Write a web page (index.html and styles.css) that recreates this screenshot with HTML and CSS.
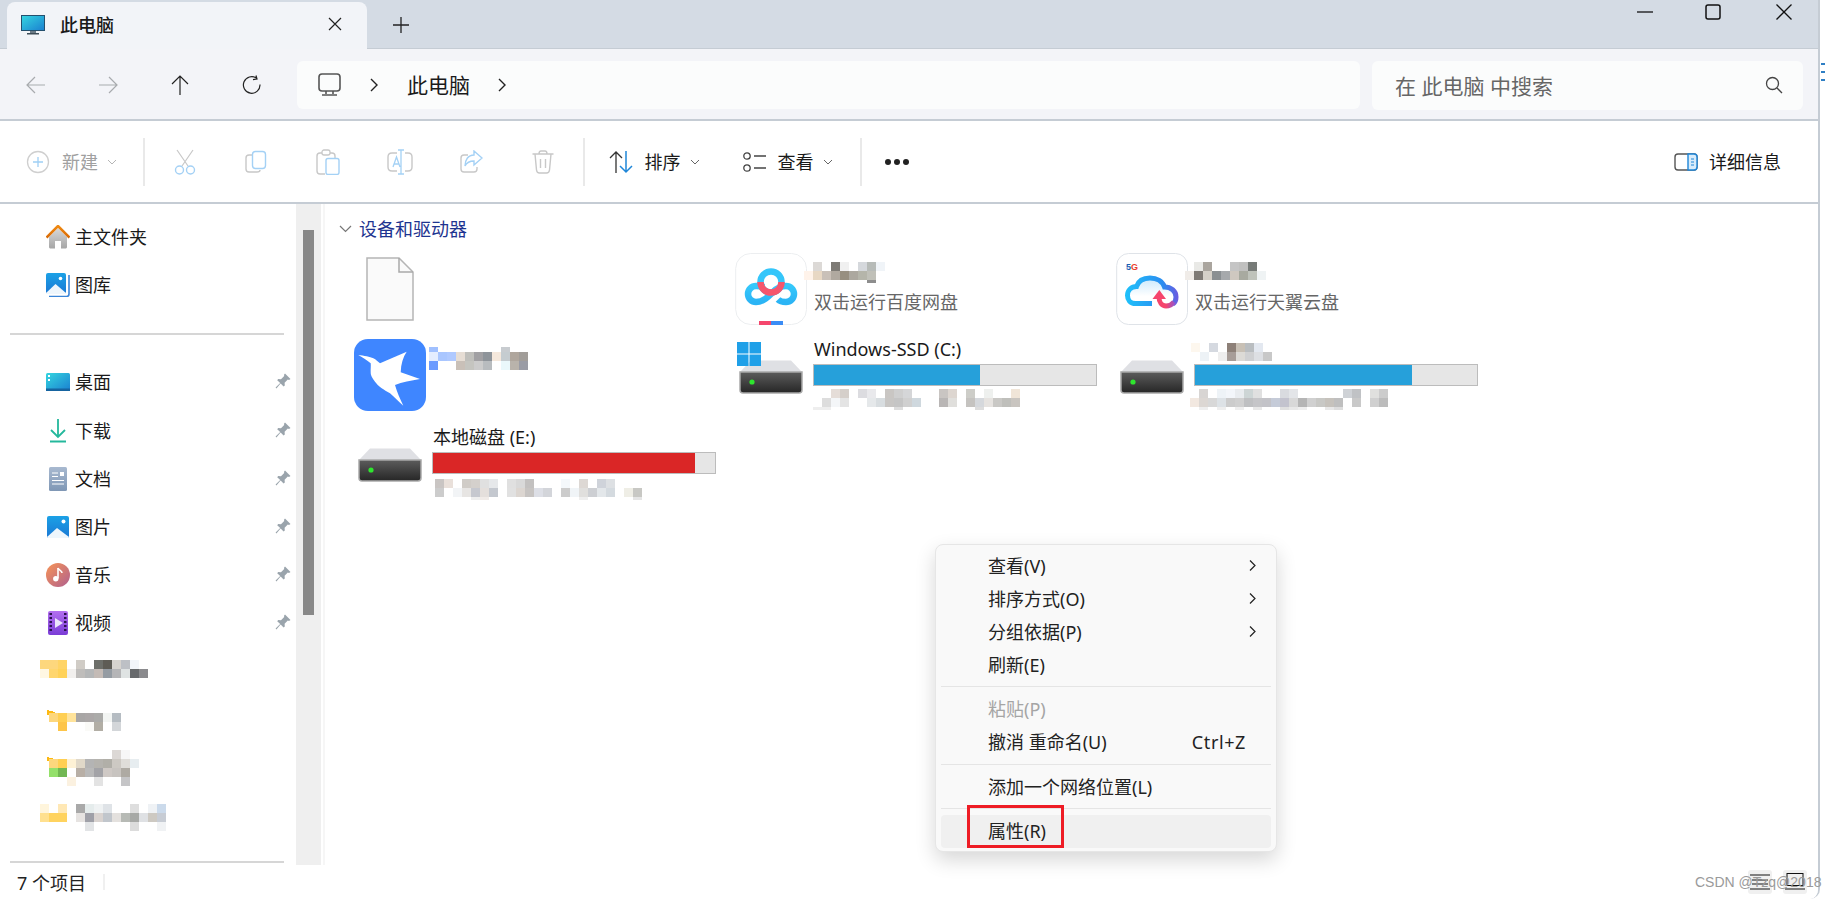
FILE: index.html
```html
<!DOCTYPE html>
<html lang="zh-CN">
<head>
    <meta charset="UTF-8">
    <title>此电脑</title>
    <link rel="stylesheet" href="styles.css">
</head>
<body>
<svg class="defs" width="0" height="0">
    <defs>
        <linearGradient id="screen" x1="0" y1="0" x2="1" y2="1"><stop offset="0" stop-color="#35d6e0"/><stop offset="1" stop-color="#1a7fd0"/></linearGradient>
        <linearGradient id="sky" x1="0" y1="0" x2="0" y2="1"><stop offset="0" stop-color="#1ba1e6"/><stop offset="1" stop-color="#1b78d4"/></linearGradient>
        <linearGradient id="hddfront" x1="0" y1="0" x2="0" y2="1"><stop offset="0" stop-color="#5c5c5c"/><stop offset="1" stop-color="#262626"/></linearGradient>
        <linearGradient id="roof" x1="0" y1="0" x2="0" y2="1"><stop offset="0" stop-color="#f08a12"/><stop offset="1" stop-color="#d86a05"/></linearGradient>
        <linearGradient id="wall" x1="0" y1="0" x2="0" y2="1"><stop offset="0" stop-color="#d8d8d8"/><stop offset="1" stop-color="#a6a6a6"/></linearGradient>
        <linearGradient id="doc" x1="0" y1="0" x2="0" y2="1"><stop offset="0" stop-color="#a8b9d0"/><stop offset="1" stop-color="#7f97b5"/></linearGradient>
        <linearGradient id="music" x1="0" y1="0" x2="1" y2="1"><stop offset="0" stop-color="#f79456"/><stop offset="1" stop-color="#b0608f"/></linearGradient>
        <linearGradient id="video" x1="0" y1="0" x2="0" y2="1"><stop offset="0" stop-color="#b36ff0"/><stop offset="1" stop-color="#7a3cd6"/></linearGradient>
        <linearGradient id="cloud" gradientUnits="userSpaceOnUse" x1="10" y1="0" x2="62" y2="0"><stop offset="0" stop-color="#1fc0fa"/><stop offset="0.7" stop-color="#2b8df0"/><stop offset="1" stop-color="#6a5be0"/></linearGradient>
        <linearGradient id="cloudfill" x1="0" y1="0" x2="0" y2="1"><stop offset="0" stop-color="#c9e8fc"/><stop offset="0.7" stop-color="#ffffff"/></linearGradient>
        <linearGradient id="swoosh" gradientUnits="userSpaceOnUse" x1="43" y1="0" x2="60" y2="0"><stop offset="0.4" stop-color="#f5456d"/><stop offset="1" stop-color="#8a55d8"/></linearGradient>
        <linearGradient id="lobes" x1="0" y1="0" x2="0" y2="1"><stop offset="0" stop-color="#35c8fb"/><stop offset="1" stop-color="#2bb4f5"/></linearGradient>
        <symbol id="pin" viewBox="0 0 16 16"><path d="M10 0.5 15.5 6 14 7 12.8 6.6 9.6 9.8 9.8 12.6 8.6 13.6 5.6 10.6 1.4 15.4 0.6 14.6 5.2 10 2.2 7.2 3.2 6 6 6.2 9.2 3 9 1.8Z" fill="#9aa4ac"/></symbol>
        <symbol id="hdd" viewBox="0 0 64 34">
            <path d="M12 0.5H52L63 12H1Z" fill="#dfe0e4"/>
            <path d="M1 12H63V30C63 32 62 33 60 33H4C2 33 1 32 1 30Z" fill="url(#hddfront)" stroke="#a9a9a9" stroke-width="1.5"/>
            <circle cx="13" cy="22" r="2.6" fill="#2ee62e"/>
        </symbol>
    </defs>
</svg>

<div class="window">
    <header class="titlebar">
        <div class="tab">
            <svg class="tab-icon" width="24" height="20" viewBox="0 0 24 20"><rect x="0.5" y="0.5" width="23" height="15" fill="url(#screen)" stroke="#24506e"/><rect x="9" y="16" width="6" height="2" fill="#6b7a85"/><rect x="6" y="18" width="12" height="1.5" fill="#3d4c57"/></svg>
            <span class="tab-title">此电脑</span>
            <svg class="tab-close" width="14" height="14" viewBox="0 0 14 14"><path d="M1 1 13 13M13 1 1 13" stroke="#222" stroke-width="1.2" fill="none"/></svg>
        </div>
        <svg class="new-tab" width="16" height="16" viewBox="0 0 16 16"><path d="M8 0V16M0 8H16" stroke="#222" stroke-width="1.3" fill="none"/></svg>
        <div class="win-controls">
            <svg width="16" height="16" viewBox="0 0 16 16"><path d="M0 8H16" stroke="#111" stroke-width="1.3"/></svg>
            <svg width="16" height="16" viewBox="0 0 16 16"><rect x="1" y="1" width="14" height="14" rx="2" fill="none" stroke="#111" stroke-width="1.5"/></svg>
            <svg class="win-close" width="16" height="16" viewBox="0 0 16 16"><path d="M0.5 0.5 15.5 15.5M15.5 0.5 0.5 15.5" stroke="#111" stroke-width="1.3"/></svg>
        </div>
    </header>

    <nav class="addressbar">
        <div class="nav-btn"><svg width="20" height="18" viewBox="0 0 20 18"><path d="M19 9H1M9 1 1 9 9 17" fill="none" stroke="#a8abae" stroke-width="1.2"/></svg></div>
        <div class="nav-btn"><svg width="20" height="18" viewBox="0 0 20 18"><path d="M1 9H19M11 1 19 9 11 17" fill="none" stroke="#a8abae" stroke-width="1.2"/></svg></div>
        <div class="nav-btn"><svg width="18" height="20" viewBox="0 0 18 20"><path d="M9 20V1M1 9 9 1 17 9" fill="none" stroke="#222" stroke-width="1.2"/></svg></div>
        <div class="nav-btn"><svg width="20" height="20" viewBox="0 0 20 20"><path d="M14.5 3.2A8.3 8.3 0 1 0 18 9.5M14 0.5 15 4 11 4.6" fill="none" stroke="#222" stroke-width="1.2"/></svg></div>
        <div class="path-box">
            <svg class="pc-icon" width="24" height="24" viewBox="0 0 24 24"><rect x="1" y="1" width="21" height="17" rx="3" fill="none" stroke="#555" stroke-width="1.6"/><path d="M8 18V21M15 18V21M4 22H19" stroke="#555" stroke-width="1.6" fill="none"/></svg>
            <svg class="crumb" width="8" height="14" viewBox="0 0 8 14"><path d="M1 1 7 7 1 13" fill="none" stroke="#222" stroke-width="1.4"/></svg>
            <span class="path-text">此电脑</span>
            <svg class="crumb" width="8" height="14" viewBox="0 0 8 14"><path d="M1 1 7 7 1 13" fill="none" stroke="#222" stroke-width="1.4"/></svg>
        </div>
        <div class="search-box">
            <span>在 此电脑 中搜索</span>
            <svg width="18" height="18" viewBox="0 0 18 18"><circle cx="7.5" cy="7.5" r="6" fill="none" stroke="#444" stroke-width="1.3"/><path d="M12 12 17 17" stroke="#444" stroke-width="1.3"/></svg>
        </div>
    </nav>

    <div class="toolbar">
        <div class="tool tool-new">
            <svg width="24" height="24" viewBox="0 0 24 24"><circle cx="12" cy="12" r="10.5" fill="none" stroke="#cfcfcf" stroke-width="1.3"/><path d="M12 7V17M7 12H17" stroke="#9fcff5" stroke-width="1.3"/></svg>
            <span class="tool-text off">新建</span>
            <svg class="caret" width="10" height="6" viewBox="0 0 10 6"><path d="M1 1 5 5 9 1" fill="none" stroke="#b5b5b5"/></svg>
        </div>
        <div class="tool-sep"></div>
        <div class="icon-tool"><svg width="24" height="26" viewBox="0 0 24 26"><path d="M4 1 15 17M20 1 9 17" stroke="#c8c8c8" stroke-width="1.2" fill="none"/><circle cx="6.5" cy="21" r="4" fill="none" stroke="#a4d1f5" stroke-width="1.4"/><circle cx="17.5" cy="21" r="4" fill="none" stroke="#a4d1f5" stroke-width="1.4"/></svg></div>
        <div class="icon-tool"><svg width="24" height="24" viewBox="0 0 24 24"><path d="M8 5H5C3 5 2 6 2 8V19C2 21 3 22 5 22H13C15 22 16 21 16 20" fill="none" stroke="#c8c8c8" stroke-width="1.4"/><rect x="8.5" y="1.5" width="13" height="17" rx="3" fill="#fff" stroke="#a4d1f5" stroke-width="1.4"/></svg></div>
        <div class="icon-tool"><svg width="24" height="26" viewBox="0 0 24 26"><path d="M6 4H4C2 4 1 5 1 7V22C1 24 2 25 4 25H9M19 9V7C19 5 18 4 16 4H14" fill="none" stroke="#c8c8c8" stroke-width="1.4"/><rect x="6" y="1" width="8" height="5" rx="2" fill="#fff" stroke="#c8c8c8" stroke-width="1.3"/><rect x="10" y="9.5" width="13" height="16" rx="2" fill="#fff" stroke="#a4d1f5" stroke-width="1.4"/></svg></div>
        <div class="icon-tool"><svg width="26" height="26" viewBox="0 0 26 26"><path d="M10 4H5C2.5 4 1 5.5 1 8V18C1 20.5 2.5 22 5 22H10M18 4H21C23.5 4 25 5.5 25 8V18C25 20.5 23.5 22 21 22H18" fill="none" stroke="#c8c8c8" stroke-width="1.4"/><path d="M11 1H17M14 1V25M11 25H17M6 18 9.5 8 13 18M7 15H12" fill="none" stroke="#a4d1f5" stroke-width="1.3"/></svg></div>
        <div class="icon-tool"><svg width="24" height="24" viewBox="0 0 24 24"><path d="M9 5H5C3 5 2 6 2 8V19C2 21 3 22 5 22H15C17 22 18 21 18 19V17" fill="none" stroke="#c8c8c8" stroke-width="1.4"/><path d="M15 1 23 8 15 15V11C11 11 8 12 6 16 6 10 9 5 15 5Z" fill="none" stroke="#a4d1f5" stroke-width="1.4"/></svg></div>
        <div class="icon-tool"><svg width="22" height="24" viewBox="0 0 22 24"><path d="M0.5 4H21.5M7 4C7 2 8 1 9 1H13C14 1 15 2 15 4M3 4 4.5 20C4.7 22 6 23 7.5 23H14.5C16 23 17.3 22 17.5 20L19 4M8.5 9V18M13.5 9V18" fill="none" stroke="#c8c8c8" stroke-width="1.4"/></svg></div>
        <div class="tool-sep"></div>
        <div class="tool tool-sort">
            <svg width="24" height="24" viewBox="0 0 24 24"><path d="M7 23V2M1 8 7 2 13 8" fill="none" stroke="#333" stroke-width="1.3"/><path d="M17 1V22M11 16 17 22 23 16" fill="none" stroke="#1f86d8" stroke-width="1.5"/></svg>
            <span class="tool-text">排序</span>
            <svg class="caret" width="10" height="6" viewBox="0 0 10 6"><path d="M1 1 5 5 9 1" fill="none" stroke="#666"/></svg>
        </div>
        <div class="tool tool-view">
            <svg width="24" height="20" viewBox="0 0 24 20"><circle cx="4" cy="4" r="3.2" fill="none" stroke="#444" stroke-width="1.3"/><circle cx="4" cy="16" r="3.2" fill="none" stroke="#444" stroke-width="1.3"/><path d="M11 4H23M11 16H23" stroke="#444" stroke-width="1.6"/></svg>
            <span class="tool-text">查看</span>
            <svg class="caret" width="10" height="6" viewBox="0 0 10 6"><path d="M1 1 5 5 9 1" fill="none" stroke="#666"/></svg>
        </div>
        <div class="tool-sep"></div>
        <div class="more"><i></i><i></i><i></i></div>
        <div class="tool tool-details">
            <svg width="24" height="18" viewBox="0 0 24 18"><rect x="1" y="1" width="22" height="16" rx="3" fill="none" stroke="#555" stroke-width="1.4"/><path d="M14 1H20C22 1 23 2 23 4V14C23 16 22 17 20 17H14Z" fill="#d8ecfb" stroke="#1f86d8" stroke-width="1.4"/><path d="M17 6H20M17 9H20M17 12H20" stroke="#1f86d8"/></svg>
            <span class="tool-text">详细信息</span>
        </div>
    </div>

    <div class="content">
        <aside class="sidebar">
            <div class="side-row side-first">
                <svg class="side-icon" width="24" height="24" viewBox="0 0 24 24"><path d="M3 12V22C3 23 4 23.5 5 23.5H9V16H15V23.5H19C20 23.5 21 23 21 22V12L12 3Z" fill="url(#wall)"/><path d="M0.5 12.5 12 1 23.5 12.5" fill="none" stroke="url(#roof)" stroke-width="2.6"/></svg>
                <span>主文件夹</span>
            </div>
            <div class="side-row">
                <svg class="side-icon" width="24" height="24" viewBox="0 0 24 24"><path d="M23 2V21C23 22.5 22 23.5 20.5 23.5H3" fill="none" stroke="#3a85d8" stroke-width="1.6"/><rect x="0" y="0" width="20" height="21" rx="2" fill="url(#sky)"/><path d="M0 20 9.5 11 20 20V21H0Z" fill="#eef6fc"/><circle cx="14.5" cy="5.5" r="1.8" fill="#fff"/></svg>
                <span>图库</span>
            </div>
            <div class="side-divider"></div>
            <div class="side-row">
                <svg class="side-icon" width="24" height="18" viewBox="0 0 24 18"><rect width="24" height="18" rx="1.5" fill="url(#screen)"/><rect y="15.5" width="24" height="2.5" fill="#1664a0"/><rect x="2" y="2" width="2" height="2" fill="#fff"/><rect x="2" y="6" width="2" height="2" fill="#fff"/></svg>
                <span>桌面</span>
                <svg class="pin" width="16" height="16"><use href="#pin"/></svg>
            </div>
            <div class="side-row">
                <svg class="side-icon" width="24" height="24" viewBox="0 0 24 24"><path d="M12 0V18M5 11 12 18 19 11" fill="none" stroke="#24b89c" stroke-width="1.8"/><path d="M4 22.5H20" stroke="#24b89c" stroke-width="2"/></svg>
                <span>下载</span>
                <svg class="pin" width="16" height="16"><use href="#pin"/></svg>
            </div>
            <div class="side-row">
                <svg class="side-icon" width="24" height="24" viewBox="0 0 24 24"><rect x="3" y="0" width="18" height="24" rx="1.5" fill="url(#doc)"/><path d="M6 6H12M6 9.5H12M6 13.5H18M6 17H18" stroke="#fff"/><rect x="14" y="5" width="4" height="4" fill="#fff"/></svg>
                <span>文档</span>
                <svg class="pin" width="16" height="16"><use href="#pin"/></svg>
            </div>
            <div class="side-row">
                <svg class="side-icon" width="24" height="22" viewBox="0 0 24 22"><rect x="1" y="0" width="22" height="22" rx="2" fill="url(#sky)"/><path d="M1 21 11 12 23 21 22 22H2Z" fill="#eef6fc"/><circle cx="17.5" cy="5.5" r="2" fill="#fff"/></svg>
                <span>图片</span>
                <svg class="pin" width="16" height="16"><use href="#pin"/></svg>
            </div>
            <div class="side-row">
                <svg class="side-icon" width="24" height="24" viewBox="0 0 24 24"><circle cx="12" cy="12" r="12" fill="url(#music)"/><path d="M12 5V15.5" stroke="#fff" stroke-width="1.6"/><path d="M12 5C13 7.5 16 7.5 16 10" fill="none" stroke="#fff" stroke-width="1.6"/><circle cx="9.8" cy="15.8" r="2.7" fill="#fff"/></svg>
                <span>音乐</span>
                <svg class="pin" width="16" height="16"><use href="#pin"/></svg>
            </div>
            <div class="side-row">
                <svg class="side-icon" width="24" height="24" viewBox="0 0 24 24"><rect x="2" y="0" width="20" height="24" rx="2" fill="url(#video)"/><path d="M3.5 3H6M3.5 7H6M3.5 11H6M3.5 15H6M3.5 19H6M18 3H20.5M18 7H20.5M18 11H20.5M18 15H20.5M18 19H20.5" stroke="#2d1250" stroke-width="2"/><path d="M9 7 17 12 9 17Z" fill="#ece6fb"/></svg>
                <span>视频</span>
                <svg class="pin" width="16" height="16"><use href="#pin"/></svg>
            </div>
            <svg class="side-mosaic mosaic" width="170" height="48">
                <rect x="40" y="12" fill="#fdd77d"/><rect x="49" y="12" fill="#fdd77d"/><rect x="58" y="12" fill="#ffd466"/><rect x="76" y="12" fill="#d0ccc6"/><rect x="94" y="12" fill="#6d6f6a"/><rect x="103" y="12" fill="#5e5c55"/><rect x="112" y="12" fill="#d6d3ce"/><rect x="121" y="12" fill="#bdc0c5"/><rect x="130" y="12" fill="#f2f5fa"/>
                <rect x="40" y="21" fill="#fff7e3"/><rect x="49" y="21" fill="#ffd66e"/><rect x="58" y="21" fill="#ffd259"/><rect x="67" y="21" fill="#f2f0ee"/><rect x="76" y="21" fill="#bfbdbb"/><rect x="85" y="21" fill="#b5b7b8"/><rect x="94" y="21" fill="#c4bbb6"/><rect x="103" y="21" fill="#959ca3"/><rect x="112" y="21" fill="#b5b5b7"/><rect x="121" y="21" fill="#dfe3e3"/><rect x="130" y="21" fill="#67696c"/><rect x="139" y="21" fill="#8a8a8d"/>
            </svg>
            <svg class="side-mosaic mosaic" width="170" height="48">
                <path d="M47 14 55 16V19H47Z" fill="#fdb913"/>
                <rect x="49" y="17" fill="#fdd77d"/><rect x="58" y="17" fill="#ffcf52"/><rect x="67" y="17" fill="#ffe39a"/><rect x="76" y="17" fill="#a8a6a5"/><rect x="85" y="17" fill="#aba7a7"/><rect x="94" y="17" fill="#ababa9"/><rect x="103" y="17" fill="#f3f5f3"/><rect x="112" y="17" fill="#b5bcc2"/>
                <rect x="58" y="26" fill="#fdc549"/><rect x="85" y="26" fill="#fafaf7"/><rect x="94" y="26" fill="#b2aea5"/><rect x="112" y="26" fill="#d3d6d9"/>
            </svg>
            <svg class="side-mosaic mosaic" width="170" height="48">
                <rect x="112" y="6" fill="#dcd8d5"/><rect x="121" y="6" fill="#f7f7f7"/>
                <path d="M47 13 55 15V17H47Z" fill="#fdb913"/>
                <rect x="49" y="15" fill="#fdd77d"/><rect x="58" y="15" fill="#ffcf52"/><rect x="67" y="15" fill="#fdf1d5"/><rect x="76" y="15" fill="#e0d8c8"/><rect x="85" y="15" fill="#b4b4b4"/><rect x="94" y="15" fill="#b5b3ae"/><rect x="103" y="15" fill="#b1afa8"/><rect x="112" y="15" fill="#cdc9c3"/><rect x="121" y="15" fill="#dfddd9"/><rect x="130" y="15" fill="#e7edf0"/>
                <rect x="49" y="24" fill="#94e06a"/><rect x="58" y="24" fill="#72b752"/><rect x="76" y="24" fill="#b8afa6"/><rect x="85" y="24" fill="#b9b9b9"/><rect x="94" y="24" fill="#a3a3a7"/><rect x="103" y="24" fill="#cfc9c5"/><rect x="112" y="24" fill="#c8c4c0"/><rect x="121" y="24" fill="#aeaaa3"/>
                <rect x="67" y="33" fill="#fbf1e0"/><rect x="94" y="33" fill="#e3e3e3"/><rect x="121" y="33" fill="#c5c5c7"/>
            </svg>
            <svg class="side-mosaic mosaic" width="170" height="48">
                <rect x="40" y="12" fill="#fff5dc"/><rect x="58" y="12" fill="#ffe8b5"/><rect x="76" y="12" fill="#a9a9a9"/><rect x="85" y="12" fill="#e5ecec"/><rect x="94" y="12" fill="#eff2f3"/><rect x="103" y="12" fill="#dfe3e7"/><rect x="130" y="12" fill="#dedede"/><rect x="148" y="12" fill="#eff2f5"/><rect x="157" y="12" fill="#cbdaeb"/>
                <rect x="40" y="21" fill="#ffe08f"/><rect x="49" y="21" fill="#ffd35f"/><rect x="58" y="21" fill="#ffd35f"/><rect x="76" y="21" fill="#e6e3e1"/><rect x="85" y="21" fill="#9fa0a8"/><rect x="94" y="21" fill="#d9d3d0"/><rect x="103" y="21" fill="#c1c6cc"/><rect x="112" y="21" fill="#e4e1de"/><rect x="121" y="21" fill="#b7bab5"/><rect x="130" y="21" fill="#a7a9a6"/><rect x="139" y="21" fill="#dfe1e4"/><rect x="148" y="21" fill="#cdc9c2"/><rect x="157" y="21" fill="#c7ccd4"/>
                <rect x="85" y="30" fill="#e2e4e6"/><rect x="130" y="30" fill="#dcdcdc"/><rect x="157" y="30" fill="#f0f2f4"/>
            </svg>
            <div class="side-divider side-divider-end"></div>
        </aside>
        <div class="scroll-track"><div class="scroll-thumb"></div></div>

        <main class="main">
            <div class="group-head">
                <svg width="13" height="8" viewBox="0 0 13 8"><path d="M1 1 6.5 6.5 12 1" fill="none" stroke="#777" stroke-width="1.2"/></svg>
                <span>设备和驱动器</span>
            </div>
            <div class="tiles">
                <div class="tile">
                    <div class="tile-icon"><svg width="48" height="64" viewBox="0 0 48 64"><path d="M1 1H33L47 15V63H1Z" fill="#fafafa" stroke="#b5b5b5" stroke-width="1.5"/><path d="M33 1V15H47" fill="none" stroke="#a9a9a9" stroke-width="1.5"/></svg></div>
                </div>
                <div class="tile">
                    <div class="tile-icon">
                        <svg width="72" height="72" viewBox="0 0 72 72">
                            <rect x="0.7" y="0.5" width="70.8" height="71" rx="15" fill="#fff" stroke="#eceef0"/>
                            <path d="M29 34C27 33.3 24 33 21 33A8 8 0 1 0 21 49C28 49 33 44 38 39 42 35 46 33 51 33A8 8 0 1 1 51 49C48 49 45 48.5 43 46.5" fill="none" stroke="url(#lobes)" stroke-width="6.5"/>
                            <circle cx="36" cy="29" r="10.5" fill="none" stroke="#35c6fa" stroke-width="6.5"/>
                            <path d="M25.5 29A10.5 10.5 0 0 0 46.5 29" fill="none" stroke="#f5566d" stroke-width="6.5"/>
                            <rect x="24" y="68" width="12" height="4" fill="#f5466d"/><rect x="36" y="68" width="12" height="4" fill="#3a8cf5"/>
                        </svg>
                    </div>
                    <div class="tile-text">
                        <svg class="mosaic name-mosaic" width="90" height="21">
                            <rect x="9" y="0" fill="#dcd9d6"/><rect x="27" y="0" fill="#7d7a75"/><rect x="36" y="0" fill="#f0f0f0"/><rect x="54" y="0" fill="#d5d8dc"/><rect x="63" y="0" fill="#b7bbb8"/><rect x="72" y="0" fill="#f0f4f8"/>
                            <rect x="0" y="9" fill="#fff3ea"/><rect x="9" y="9" fill="#e8d8c4"/><rect x="18" y="9" fill="#c9c0b8"/><rect x="27" y="9" fill="#b0a9a0"/><rect x="36" y="9" fill="#978f80"/><rect x="45" y="9" fill="#aca89f"/><rect x="54" y="9" fill="#b5b5aa"/><rect x="63" y="9" fill="#c0c0b8"/>
                            <rect x="63" y="18" fill="#8d8d8d"/>
                        </svg>
                        <p class="tile-desc">双击运行百度网盘</p>
                    </div>
                </div>
                <div class="tile">
                    <div class="tile-icon">
                        <svg width="72" height="72" viewBox="0 0 72 72">
                            <rect x="0.7" y="0.5" width="70.8" height="71" rx="12" fill="#fff" stroke="#dfe3e8"/>
                            <text class="five-g" x="10" y="16.5">5<tspan fill="#e8402f">G</tspan></text>
                            <path d="M36 50.5H19.5C14 50.5 11.5 46.500 11.5 42.500 11.5 37 15.500 33.500 20.500 33.500 22.500 27.500 28 25 34 25 41 25 46.500 28.500 48.500 34 55 34 60 38 60 44 60 47 59 49.500 57 51" fill="url(#cloudfill)" stroke="url(#cloud)" stroke-width="5"/>
                            <path d="M43 44C43 49.500 46 53 50 53 53.500 53 56 51.500 58 49" fill="none" stroke="url(#swoosh)" stroke-width="5"/>
                            <path d="M43.300 37 36.500 46H50Z" fill="#f5456d"/>
                        </svg>
                    </div>
                    <div class="tile-text">
                        <svg class="mosaic name-mosaic" width="90" height="21">
                            <rect x="9" y="0" fill="#e9e9e6"/><rect x="18" y="0" fill="#aaa59e"/><rect x="45" y="0" fill="#c5c5c5"/><rect x="54" y="0" fill="#c0c0bf"/><rect x="63" y="0" fill="#777b78"/>
                            <rect x="0" y="9" fill="#f0ece8"/><rect x="9" y="9" fill="#7f7a75"/><rect x="18" y="9" fill="#d5d0c8"/><rect x="27" y="9" fill="#8a8f92"/><rect x="36" y="9" fill="#a6a9ac"/><rect x="45" y="9" fill="#cfc8c0"/><rect x="54" y="9" fill="#a8aaa0"/><rect x="63" y="9" fill="#bfc3bb"/><rect x="72" y="9" fill="#eff3f4"/>
                        </svg>
                        <p class="tile-desc">双击运行天翼云盘</p>
                    </div>
                </div>

                <div class="tile">
                    <div class="tile-icon">
                        <svg width="72" height="72" viewBox="0 0 72 72">
                            <rect width="72" height="72" rx="14" fill="#3f86ff"/>
                            <path d="M4.3 16C10 16.5 16 18 19.3 19.3 22 20.500 24 23 26 24.3L52.7 12.7C49 18 47 25 46.7 33.3L66 40C57 41.5 48 43 41 46 43 53 46 60 49.3 66.7 44 62 40 58 36 54.3 30 51 24 47 21 42.7 18 39 16.7 36 16.7 34.3 16.5 30 17 27 16.7 24.3 13 21 8 18 4.3 16Z" fill="#fff"/>
                        </svg>
                    </div>
                    <div class="tile-text">
                        <svg class="mosaic app-mosaic" width="100" height="23">
                            <rect x="0" y="-4" fill="#a0c0ff"/><rect x="72" y="-4" fill="#c8ccd0"/>
                            <rect x="0" y="5" fill="#e4edff"/><rect x="9" y="5" fill="#a9c6ff"/><rect x="18" y="5" fill="#afc9ff"/><rect x="27" y="5" fill="#e6ddd4"/><rect x="36" y="5" fill="#bfbfbb"/><rect x="45" y="5" fill="#a1a0a3"/><rect x="54" y="5" fill="#8e949a"/><rect x="63" y="5" fill="#f5e8dc"/><rect x="72" y="5" fill="#c5ccd0"/><rect x="81" y="5" fill="#afa69d"/><rect x="90" y="5" fill="#a19d99"/>
                            <rect x="0" y="14" fill="#6a9aff"/><rect x="27" y="14" fill="#c9c0b8"/><rect x="36" y="14" fill="#c5c5c0"/><rect x="45" y="14" fill="#cccccc"/><rect x="54" y="14" fill="#b8bcbf"/><rect x="72" y="14" fill="#eaf8fb"/><rect x="81" y="14" fill="#b9b3ab"/><rect x="90" y="14" fill="#9a9ca5"/>
                        </svg>
                    </div>
                </div>
                <div class="tile">
                    <div class="tile-icon">
                        <svg class="hdd" width="64" height="34"><use href="#hdd"/></svg>
                        <svg class="win-badge" width="24" height="24" viewBox="0 0 24 24"><path d="M0 0H11.5V11.5H0ZM12.5 0H24V11.5H12.5ZM0 12.5H11.5V24H0ZM12.5 12.5H24V24H12.5Z" fill="#1fa0e8"/></svg>
                    </div>
                    <div class="tile-text">
                        <div class="drive-name">Windows-SSD (C:)</div>
                        <div class="bar"><div class="bar-fill blue" style="width:59%"></div></div>
                        <svg class="mosaic" width="220" height="21">
                            <rect x="18" y="0" fill="#e5ddd8"/><rect x="27" y="0" fill="#d5cfca"/><rect x="45" y="0" fill="#dcdce0"/><rect x="54" y="0" fill="#e9e9ec"/><rect x="72" y="0" fill="#c9c6c3"/><rect x="81" y="0" fill="#cfcfcf"/><rect x="90" y="0" fill="#d5d6d8"/><rect x="126" y="0" fill="#c9c5c2"/><rect x="135" y="0" fill="#ddd6d0"/><rect x="153" y="0" fill="#cdcdc8"/><rect x="171" y="0" fill="#eef0ee"/><rect x="198" y="0" fill="#f0e5d8"/>
                            <rect x="9" y="9" fill="#dddddd"/><rect x="18" y="9" fill="#f4f6f8"/><rect x="27" y="9" fill="#e4e4e4"/><rect x="54" y="9" fill="#e5e8ea"/><rect x="63" y="9" fill="#d8dde0"/><rect x="72" y="9" fill="#c8c6c4"/><rect x="81" y="9" fill="#c5c5c5"/><rect x="90" y="9" fill="#d0d0d0"/><rect x="99" y="9" fill="#cfd8de"/><rect x="126" y="9" fill="#b9b6b5"/><rect x="135" y="9" fill="#e0dfdc"/><rect x="153" y="9" fill="#c5c3c0"/><rect x="162" y="9" fill="#d5d8dc"/><rect x="171" y="9" fill="#e6e3e0"/><rect x="180" y="9" fill="#c9c8c5"/><rect x="189" y="9" fill="#bfbfbb"/><rect x="198" y="9" fill="#c9c5c0"/>
                            <rect x="0" y="18" fill="#eeeeee"/><rect x="9" y="18" fill="#eeeeee"/><rect x="81" y="18" fill="#dddddd"/><rect x="162" y="18" fill="#dddddd"/>
                        </svg>
                    </div>
                </div>
                <div class="tile">
                    <div class="tile-icon">
                        <svg class="hdd" width="64" height="34"><use href="#hdd"/></svg>
                    </div>
                    <div class="tile-text">
                        <svg class="mosaic drive-mosaic" width="100" height="27">
                            <rect x="0" y="6" fill="#fdf7ee"/><rect x="18" y="6" fill="#d5d9e0"/><rect x="36" y="6" fill="#8d8078"/><rect x="45" y="6" fill="#c8c0b5"/><rect x="54" y="6" fill="#b9bdc0"/><rect x="63" y="6" fill="#e3e8f0"/>
                            <rect x="9" y="15" fill="#edf2f6"/><rect x="27" y="15" fill="#eeeeee"/><rect x="36" y="15" fill="#a79d98"/><rect x="45" y="15" fill="#dcdad6"/><rect x="54" y="15" fill="#cfd0d2"/><rect x="63" y="15" fill="#dddfe3"/><rect x="72" y="15" fill="#c8c8c8"/>
                        </svg>
                        <div class="bar"><div class="bar-fill blue" style="width:77%"></div></div>
                        <svg class="mosaic wide-mosaic" width="220" height="21">
                            <rect x="9" y="0" fill="#d8d5d3"/><rect x="27" y="0" fill="#eef3f7"/><rect x="36" y="0" fill="#f3f6fa"/><rect x="45" y="0" fill="#e9ecef"/><rect x="54" y="0" fill="#cdd5d5"/><rect x="63" y="0" fill="#e0e0e0"/><rect x="90" y="0" fill="#d9dbdf"/><rect x="99" y="0" fill="#e3e5e8"/><rect x="153" y="0" fill="#cfd2d6"/><rect x="162" y="0" fill="#c0c2c5"/><rect x="180" y="0" fill="#e0e0de"/><rect x="189" y="0" fill="#cccccc"/>
                            <rect x="0" y="9" fill="#f2e8e0"/><rect x="9" y="9" fill="#dcd7d3"/><rect x="18" y="9" fill="#d8d8d8"/><rect x="27" y="9" fill="#dde2e6"/><rect x="36" y="9" fill="#cccccc"/><rect x="45" y="9" fill="#d0d0d0"/><rect x="54" y="9" fill="#bfc0c2"/><rect x="63" y="9" fill="#c5c5c8"/><rect x="72" y="9" fill="#c3c3c8"/><rect x="81" y="9" fill="#c5cbd8"/><rect x="90" y="9" fill="#c3c3ce"/><rect x="99" y="9" fill="#d8d8d8"/><rect x="108" y="9" fill="#b5b5b5"/><rect x="117" y="9" fill="#d0d0d0"/><rect x="126" y="9" fill="#c8c8c5"/><rect x="135" y="9" fill="#c6c2bc"/><rect x="144" y="9" fill="#bfbfbf"/><rect x="162" y="9" fill="#c9c9c9"/><rect x="180" y="9" fill="#d0d0d0"/><rect x="189" y="9" fill="#bcbcbc"/>
                            <rect x="9" y="18" fill="#eeeeee"/><rect x="27" y="18" fill="#eeeeee"/><rect x="45" y="18" fill="#eeeeee"/><rect x="63" y="18" fill="#e8e8e8"/><rect x="90" y="18" fill="#e0e0e0"/><rect x="99" y="18" fill="#e8e8e8"/><rect x="108" y="18" fill="#eeeeee"/><rect x="135" y="18" fill="#e8e8e8"/><rect x="144" y="18" fill="#dddddd"/>
                        </svg>
                    </div>
                </div>

                <div class="tile">
                    <div class="tile-icon">
                        <svg class="hdd" width="64" height="34"><use href="#hdd"/></svg>
                    </div>
                    <div class="tile-text">
                        <div class="drive-name">本地磁盘 (E:)</div>
                        <div class="bar"><div class="bar-fill red" style="width:93%"></div></div>
                        <svg class="mosaic low-mosaic" width="220" height="21">
                            <rect x="3" y="0" fill="#c9c5c3"/><rect x="12" y="0" fill="#e9e0da"/><rect x="30" y="0" fill="#d0ccc7"/><rect x="39" y="0" fill="#d4d0cc"/><rect x="48" y="0" fill="#e0e0e0"/><rect x="57" y="0" fill="#e6e8ea"/><rect x="75" y="0" fill="#e0e0e0"/><rect x="84" y="0" fill="#d9d9d9"/><rect x="93" y="0" fill="#c3c1c0"/><rect x="129" y="0" fill="#f4f8fb"/><rect x="147" y="0" fill="#ddd8d4"/><rect x="165" y="0" fill="#cfd3da"/><rect x="174" y="0" fill="#dde0e3"/>
                            <rect x="3" y="9" fill="#cccccc"/><rect x="21" y="9" fill="#f2f4f6"/><rect x="30" y="9" fill="#e7e5e3"/><rect x="39" y="9" fill="#c6c8cf"/><rect x="48" y="9" fill="#e4dfdc"/><rect x="57" y="9" fill="#c4c8cf"/><rect x="75" y="9" fill="#e1e1e1"/><rect x="84" y="9" fill="#dcd6d1"/><rect x="93" y="9" fill="#c7c4c2"/><rect x="102" y="9" fill="#dddfe6"/><rect x="111" y="9" fill="#d3d5da"/><rect x="129" y="9" fill="#cccccc"/><rect x="138" y="9" fill="#f0f4f7"/><rect x="147" y="9" fill="#e0dfdd"/><rect x="156" y="9" fill="#cdcfd3"/><rect x="165" y="9" fill="#e3e7ea"/><rect x="174" y="9" fill="#d4dadf"/><rect x="192" y="9" fill="#efeee6"/><rect x="201" y="9" fill="#c8c8c4"/>
                            <rect x="39" y="18" fill="#eeeeee"/><rect x="48" y="18" fill="#f0ebe8"/><rect x="147" y="18" fill="#eeeeee"/><rect x="201" y="18" fill="#e5e5e5"/>
                        </svg>
                    </div>
                </div>
            </div>
        </main>
    </div>

    <footer class="statusbar">
        <span>7 个项目</span>
        <div class="status-sep"></div>
        <div class="view-toggle">
            <div class="toggle"><svg width="20" height="18" viewBox="0 0 20 18"><path d="M0 2H20M2 7H18M2 11H18M0 16H20" stroke="#111" stroke-width="1.2"/></svg></div>
            <div class="toggle"><svg width="20" height="18" viewBox="0 0 20 18"><rect x="2" y="0.5" width="16" height="12" fill="none" stroke="#111"/><path d="M0 16H20" stroke="#111" stroke-width="1.2"/></svg></div>
        </div>
    </footer>
</div>

<div class="edge-bleed"></div>

<div class="context-menu">
    <div class="menu-item">查看(V)<svg class="menu-arrow" width="7" height="11" viewBox="0 0 7 11"><path d="M1 0.5 6 5.5 1 10.5" fill="none" stroke="#222" stroke-width="1.2"/></svg></div>
    <div class="menu-item">排序方式(O)<svg class="menu-arrow" width="7" height="11" viewBox="0 0 7 11"><path d="M1 0.5 6 5.5 1 10.5" fill="none" stroke="#222" stroke-width="1.2"/></svg></div>
    <div class="menu-item">分组依据(P)<svg class="menu-arrow" width="7" height="11" viewBox="0 0 7 11"><path d="M1 0.5 6 5.5 1 10.5" fill="none" stroke="#222" stroke-width="1.2"/></svg></div>
    <div class="menu-item">刷新(E)</div>
    <div class="menu-sep"></div>
    <div class="menu-item disabled">粘贴(P)</div>
    <div class="menu-item">撤消 重命名(U)<span class="menu-key">Ctrl+Z</span></div>
    <div class="menu-sep"></div>
    <div class="menu-item">添加一个网络位置(L)</div>
    <div class="menu-sep"></div>
    <div class="menu-item active">属性(R)</div>
</div>
<div class="red-box"></div>
<div class="watermark">CSDN @Tzq@2018</div>
</body>
</html>
```

FILE: styles.css
```css
* {
    box-sizing: border-box;
}

body {
    margin: 0;
    width: 1825px;
    height: 899px;
    overflow: hidden;
    background: #fff;
    font-family: "Noto Sans", "Noto Sans CJK SC", sans-serif;
    font-size: 18px;
    color: #1a1a1a;
}

.defs {
    position: absolute;
}

svg {
    display: block;
    flex: none;
}

.mosaic {
    shape-rendering: crispEdges;
    margin-top: 3px;
}

.mosaic rect {
    width: 9px;
    height: 9px;
}

.window {
    width: 1820px;
    height: 899px;
    display: flex;
    flex-direction: column;
    border-right: 2px solid #c5ccd4;
    border-bottom-right-radius: 10px;
    overflow: hidden;
}

/* title bar */
.titlebar {
    height: 49px;
    flex: none;
    background: #d4dbe4;
    border-bottom: 1px solid #c5ccd4;
    display: flex;
    align-items: flex-start;
}

.tab {
    width: 360px;
    height: 47px;
    margin: 2px 0 -1px 7px;
    padding: 0 25px 0 14px;
    background: #f2f4f8;
    border-radius: 8px 8px 0 0;
    display: flex;
    align-items: center;
    position: relative;
}

.tab-icon {
    margin-bottom: 2px;
}

.tab-title {
    margin-left: 15px;
    font-size: 18px;
    font-weight: 500;
    line-height: 24px;
    margin-bottom: 2px;
}

.tab-close {
    margin: 0 0 3px auto;
}

.new-tab {
    margin: 17px 0 0 26px;
}

.win-controls {
    margin-left: auto;
    margin-right: 26px;
    padding-top: 4px;
    display: flex;
    gap: 52px;
}

.win-close {
    margin-left: 3px;
}

/* address bar */
.addressbar {
    height: 72px;
    flex: none;
    background: #f3f4f8;
    border-bottom: 2px solid #c5ccd4;
    display: flex;
    align-items: center;
    padding-top: 2px;
}

.nav-btn {
    width: 72px;
    display: flex;
    justify-content: center;
}

.path-box {
    width: 1063px;
    height: 48px;
    margin-left: 9px;
    padding-left: 21px;
    background: #fbfcfc;
    border-radius: 6px;
    display: flex;
    align-items: center;
}

.crumb {
    margin-left: 28px;
}

.path-text {
    margin-left: 29px;
    font-size: 21px;
    line-height: 28px;
}

.search-box {
    width: 431px;
    height: 49px;
    margin-left: 12px;
    padding: 0 20px 0 23px;
    background: #fbfcfc;
    border-radius: 6px;
    display: flex;
    align-items: center;
    justify-content: space-between;
    font-size: 21px;
    color: #666;
}

/* toolbar */
.toolbar {
    height: 83px;
    flex: none;
    background: #fff;
    border-bottom: 2px solid #c5ccd4;
    display: flex;
    align-items: center;
}

.tool {
    display: flex;
    align-items: center;
    flex: none;
}

.tool-new {
    padding-left: 26px;
    width: 139px;
}

.tool-new .tool-text {
    margin-left: 12px;
}

.tool-text {
    line-height: 24px;
    margin-left: 12px;
}

.tool-text.off {
    color: #a0a0a0;
}

.caret {
    margin-left: 9px;
}

.tool-sep {
    width: 2px;
    height: 48px;
    margin: 0 4px;
    background: #e9e9e9;
}

.icon-tool {
    width: 71.6px;
    display: flex;
    justify-content: center;
}

.tool-sort {
    padding-left: 20px;
    width: 154px;
}

.tool-view {
    width: 113px;
}

.tool-view .tool-text {
    margin-left: 11px;
}

.more {
    display: flex;
    gap: 3px;
    margin-left: 19px;
}

.more i {
    width: 6px;
    height: 6px;
    border-radius: 50%;
    background: #222;
}

.tool-details {
    margin-left: auto;
    padding-right: 37px;
}

.tool-details .tool-text {
    margin-left: 11px;
}

/* sidebar */
.content {
    flex: 1;
    display: flex;
    min-height: 0;
}

.sidebar {
    width: 296px;
    flex: none;
}

.side-row {
    height: 48.2px;
    display: flex;
    align-items: center;
    position: relative;
    padding-left: 46px;
}

.side-first {
    margin-top: 9px;
}

.side-row span {
    position: absolute;
    left: 75px;
    line-height: 24px;
}

.side-mosaic {
    height: 48.2px;
    margin-top: 0;
}

.pin {
    position: absolute;
    left: 275px;
    top: 15px;
}

.side-divider {
    height: 2px;
    margin: 24px 12px 23px 10px;
    background: #d6d6d6;
}

.side-divider-end {
    margin: 21px 12px 0 10px;
}

.scroll-track {
    width: 25px;
    flex: none;
    background: #efefef;
    padding: 26px 7px 0;
}

.scroll-thumb {
    height: 385px;
    background: #888;
}

/* main area */
.main {
    flex: 1;
    border-left: 2px solid #f6f6f6;
    margin-left: 2px;
    padding-top: 13px;
}

.group-head {
    display: flex;
    align-items: center;
    height: 24px;
    padding-left: 14px;
    color: #1e3490;
    font-size: 18px;
}

.group-head span {
    margin-left: 7px;
    line-height: 24px;
}

.tiles {
    display: grid;
    grid-template-columns: repeat(3, 381px);
    grid-template-rows: 86px 88px 86px;
    margin: 8px 0 0 29px;
}

.tile {
    display: flex;
    gap: 6px;
    position: relative;
    padding-top: 4px;
}

.tile-icon {
    width: 72px;
    height: 72px;
    display: flex;
    align-items: center;
    justify-content: center;
}

.hdd {
    margin-top: 3px;
}

.win-badge {
    position: absolute;
    left: 2px;
    top: 7px;
}

.five-g {
    font: 700 9px "Liberation Sans", sans-serif;
    fill: #1a5fb4;
}

.tile-text {
    margin-top: -4px;
    min-width: 0;
}

.tile-desc {
    margin: 9px 0 0 1px;
    line-height: 20px;
    color: #666;
}

.name-mosaic {
    margin: 13px 0 0 -9px;
}

.app-mosaic {
    margin: 12px 0 0 -3px;
}

.drive-name {
    height: 22px;
    margin: 3px 0 4px 1px;
    line-height: 22px;
}

.drive-mosaic {
    margin: 2px 0 0 -3px;
}

.bar {
    width: 284px;
    height: 22px;
    border: 1.5px solid #bcbcbc;
    background: #e6e6e6;
}

.bar-fill {
    height: 100%;
}

.bar-fill.blue {
    background: #26a0da;
}

.bar-fill.red {
    background: #da2626;
}

.low-mosaic {
    margin-top: 5px;
}

.wide-mosaic {
    margin-left: -4px;
}

/* status bar */
.statusbar {
    height: 34px;
    flex: none;
    display: flex;
    align-items: center;
    padding-left: 17px;
    font-size: 18px;
    color: #222;
    background: #fff;
}

.status-sep {
    width: 2px;
    height: 16px;
    margin-left: 17px;
    background: #f0f0f0;
}

.view-toggle {
    margin-left: auto;
    margin-right: 11px;
    display: flex;
    gap: 11px;
}

.toggle {
    width: 24px;
    height: 24px;
    background: #f0f0f0;
    border-radius: 3px;
    display: flex;
    align-items: center;
    justify-content: center;
}

.edge-bleed {
    position: absolute;
    left: 1821px;
    top: 63px;
    width: 4px;
    height: 20px;
    background: repeating-linear-gradient(#2f7fc4 0 2px, #fff 2px 8px);
}

/* context menu */
.context-menu {
    position: absolute;
    left: 935px;
    top: 544px;
    width: 342px;
    height: 308px;
    padding: 4px 5px 0;
    background: #f9f9f9;
    border: 1.5px solid #e6e6e6;
    border-radius: 8px;
    box-shadow: 0 8px 20px rgba(0, 0, 0, 0.16);
}

.menu-item {
    height: 33px;
    padding-left: 47px;
    display: flex;
    align-items: center;
    position: relative;
    line-height: 24px;
    color: #222;
}

.menu-item.disabled {
    color: #a5a5a5;
}

.menu-item.active {
    background: #f0f0f0;
    border-radius: 4px;
}

.menu-arrow {
    position: absolute;
    right: 15px;
}

.menu-key {
    position: absolute;
    right: 25px;
    letter-spacing: 0.6px;
}

.menu-sep {
    height: 1px;
    margin: 5px 0 5.5px;
    background: #e5e5e5;
}

.red-box {
    position: absolute;
    left: 967px;
    top: 805px;
    width: 97px;
    height: 43px;
    border: 3px solid #ee1c25;
}

.watermark {
    position: absolute;
    left: 1695px;
    top: 874px;
    font: 14px/16px "Liberation Sans", sans-serif;
    color: #9a9a9a;
}
```
